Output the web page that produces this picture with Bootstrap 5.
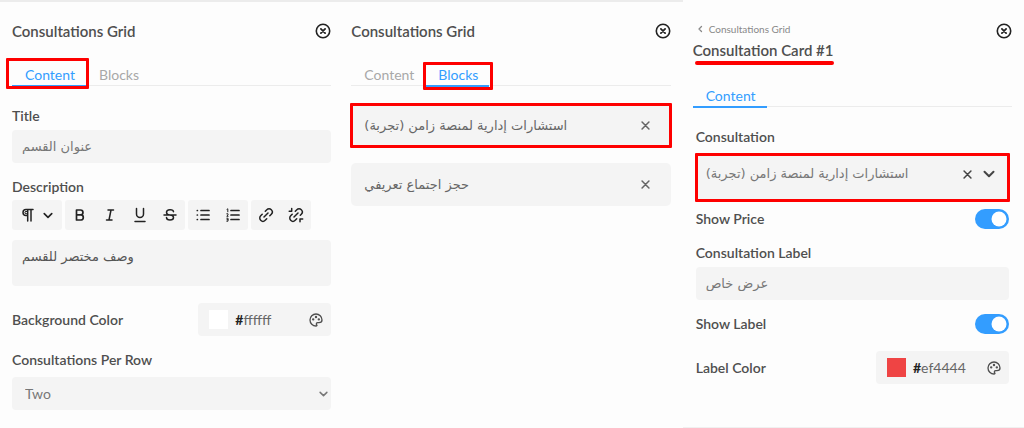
<!DOCTYPE html>
<html lang="en">
<head>
<meta charset="utf-8">
<meta name="viewport" content="width=device-width, initial-scale=1">
<title>Consultations Grid</title>
<link href="https://cdn.jsdelivr.net/npm/bootstrap@5.3.0/dist/css/bootstrap.min.css" rel="stylesheet">
<style>
  :root { --ink: #4f4f4f; --soft: #f4f4f4; --accent: #339dff; --marker: #fe0000; }
  body { background: #fdfdfd; color: var(--ink); font: 400 14px/20px Lato, "DejaVu Sans", sans-serif; }
  button, input, select, textarea { font: inherit; color: inherit; }
  svg { display: block; fill: none; stroke: currentColor; stroke-width: 2; stroke-linecap: round; stroke-linejoin: round; }
  .panel { padding: 0 12px 0 10px; }
  .panel-first { padding: 0 10px 0 12px; }
  .panel-top { border-top: 2px solid #ececec; }
  .panel-card { border-bottom: 1px solid #f0f0f0; padding-bottom: 43px; }
  .panel-head { padding-top: 19px; }
  .panel-name { font-size: 15px; line-height: 20px; font-weight: 600; margin: 0; }
  .plain { border: 0; background: none; padding: 0; }
  .close-icon { color: #222; }
  .tab-strip { border-bottom: 1px solid #ececec; }
  .tab-strip .nav-link { padding: 0 11px 0 13px; height: 20px; color: #a8a8a8; }
  .tab-strip .nav-item { margin-bottom: -2px; border-bottom: 2px solid transparent; }
  .tab-strip .nav-item:has(.active) { border-color: var(--accent); }
  .tab-strip .nav-link.active { color: var(--accent); }
  .card-tabs { margin-top: 26px; }
  .field-name { display: block; margin: 0; font-weight: 600; }
  .gap-above { margin-top: 14px; }
  .row-above { margin-top: 17px; }
  .field { background: var(--soft); border: 0; border-radius: 4px; width: 100%; color: #777; }
  .field-line { height: 33px; padding: 0 10px; }
  .field-area { height: 46px; padding: 7px 10px; margin-top: 10px; resize: none; display: block; color: #555; }
  .field-select { padding: 0 3px 0 13px; margin-top: 7px; }
  .field-tall { height: 47px; padding: 0 14px 7px 10px; gap: 11px; margin-top: 7px; }
  .arabic { direction: rtl; text-align: left; text-align-last: left; font-family: "DejaVu Sans", sans-serif; font-size: 13px; }
  .tools { gap: 3px; margin-top: 3px; }
  .tool-set { background: var(--soft); border-radius: 3px; height: 30px; color: #222; }
  .tool-set button { width: 30px; height: 30px; display: grid; place-items: center; color: inherit; }
  .tool-set .tool-wide { width: 50px; display: flex; align-items: center; justify-content: center; gap: 9px; }
  .colour-box { background: var(--soft); border-radius: 4px; height: 33px; width: 133px; padding: 0 7px 0 11px; }
  .colour-box input[type=color] { width: 19px; height: 19px; padding: 0; border: 0; background: none; appearance: none; flex: none; }
  .colour-box input[type=color]::-webkit-color-swatch-wrapper { padding: 0; }
  .colour-box input[type=color]::-webkit-color-swatch { border: 0; }
  .colour-box input[type=text] { border: 0; background: none; padding: 0; width: 60px; min-width: 0; flex: 1; color: #666; }
  .hash { color: #222; font-weight: 700; margin-left: 7px; }
  .pick { appearance: none; border: 0; background: none; padding: 0; }
  .clear-icon { color: #444; }
  .block-list { margin-top: 18px; }
  .block-item { background: var(--soft); border-radius: 5px; height: 43px; padding: 0 21px 0 13px; color: #666; }
  .crumb-box { padding-top: 3px; }
  .crumb { font-size: 10px; line-height: 14px; color: #888; text-decoration: none; gap: 6px; }
  .panel-body { padding: 0 3px; }
  .form-switch.switch-row { padding: 0; min-height: 20px; margin-bottom: 0; }
  .form-switch .form-check-input { width: 34px; height: 20px; margin: 0; border: 0; box-shadow: none; }
  .form-switch .form-check-input:checked { background-color: var(--accent); }
  .marked { position: relative; }
  .marked::after { content: ""; position: absolute; border: 3px solid var(--marker); border-radius: 1px; pointer-events: none; }
  .mark-content::after { inset: -7px -3px -4px -6px; }
  .mark-blocks::after { inset: -3px -4px -5px -2px; }
  .mark-item::after, .mark-pick::after { inset: -1px; }
  .mark-name::after { left: 2px; right: 0; bottom: -5px; border-width: 2px; border-radius: 2px; }
</style>
</head>
<body>
<svg class="d-none" aria-hidden="true">
  <symbol id="i-close" viewBox="0 0 16 16"><circle cx="8" cy="8" r="6.7" stroke-width="1.6"/><path d="M5.9 5.9l4.2 4.2M10.1 5.9l-4.2 4.2" stroke-width="1.8"/></symbol>
  <symbol id="i-x" viewBox="0 0 10 10"><path d="M1.2 1.2l7.6 7.6M8.8 1.2L1.2 8.8" stroke-width="1.700"/></symbol>
  <symbol id="i-down" viewBox="0 0 12 8"><path d="M1.5 1.8L6 6.2l4.500-4.400" stroke-width="2"/></symbol>
  <symbol id="i-palette" viewBox="0 0 24 24"><path d="M12 21a9 9 0 1 1 9-9c0 2.500-2 4-4.500 4H14.500a2 2 0 0 0-1.300 3.500c.7.700 0 1.500-1.200 1.500z"/><circle cx="7.800" cy="11" r=".8"/><circle cx="12" cy="7.500" r=".8"/><circle cx="16.200" cy="11" r=".8"/></symbol>
</svg>
<main class="container-fluid p-0">
  <div class="row g-0">
    <section class="col-md-4 panel-first panel-top" aria-label="Grid content">
      <header class="panel-head d-flex justify-content-between align-items-center">
        <h2 class="panel-name">Consultations Grid</h2>
        <button class="plain close-icon" aria-label="Close"><svg width="16" height="16"><use href="#i-close"/></svg></button>
      </header>
      <ul class="nav tab-strip mt-4">
        <li class="nav-item marked mark-content"><a class="nav-link active" href="#content">Content</a></li>
        <li class="nav-item"><a class="nav-link" href="#blocks">Blocks</a></li>
      </ul>
      <form id="content">
        <label class="field-name mt-3 pt-1" for="title">Title</label>
        <input id="title" class="field field-line arabic mt-1" value="عنوان القسم">
        <label class="field-name gap-above" for="desc">Description</label>
        <div class="d-flex flex-wrap tools">
          <div class="tool-set"><button type="button" class="plain tool-wide" aria-label="Paragraph style">
            <svg width="12" height="14" viewBox="0 0 12 14"><path d="M11 1.500H4a3 3 0 0 0 0 6h1.500M5.700 1.500V13M9 1.500V13" stroke-width="1.500"/><path d="M4 3.500h1.500v2.200H4a1 1 0 0 1 0-2.200z" stroke-width="1"/></svg>
            <svg width="10" height="7"><use href="#i-down"/></svg></button></div>
          <div class="tool-set d-flex">
            <button type="button" class="plain" aria-label="Bold"><svg width="12" height="14" viewBox="0 0 12 14"><path d="M2.500 2h4a2.400 2.400 0 0 1 0 4.900h-4zM2.500 6.900h4.700a2.600 2.600 0 0 1 0 5.100H2.500z" stroke-width="1.700"/></svg></button>
            <button type="button" class="plain" aria-label="Italic"><svg width="12" height="14" viewBox="0 0 12 14"><path d="M4 2h5.500M2.500 12H8M7 2L5 12" stroke-width="1.500"/></svg></button>
            <button type="button" class="plain" aria-label="Underline"><svg width="12" height="16" viewBox="0 0 12 16"><path d="M2.500 1.500v5.500a3.500 3.500 0 0 0 7 0V1.500M1 14.500h10" stroke-width="1.500"/></svg></button>
            <button type="button" class="plain" aria-label="Strikethrough"><svg width="14" height="14" viewBox="0 0 14 14"><path d="M10.500 3.700C10.200 1 3.500 1 3.500 4.300 3.500 6.500 6 7 7 7c2 .2 3.500 1 3.500 2.500 0 3.300-7 3.300-7 0M1 7h12" stroke-width="1.500"/></svg></button>
          </div>
          <div class="tool-set d-flex">
            <button type="button" class="plain" aria-label="Bulleted list"><svg width="14" height="14" viewBox="0 0 14 14"><path d="M5 2.500h8M5 7h8M5 11.500h8M1.300 2.500h.1M1.300 7h.1M1.300 11.500h.1" stroke-width="1.700"/></svg></button>
            <button type="button" class="plain" aria-label="Numbered list"><svg width="14" height="14" viewBox="0 0 14 14"><path d="M5 2.500h8M5 7h8M5 11.500h8" stroke-width="1.700"/><path d="M1 1.300l.8-.5v3M.8 5.800h1.200v1L.8 8.300h1.300M.8 10.200h1.200v3H.8M1 11.700h1" stroke-width="1"/></svg></button>
          </div>
          <div class="tool-set d-flex">
            <button type="button" class="plain" aria-label="Link"><svg width="16" height="16" viewBox="0 0 16 16"><path d="M6 10l4-4M7.300 4.200l1.500-1.500a3.100 3.100 0 0 1 4.500 4.500l-1.500 1.500M8.700 11.800l-1.500 1.500a3.100 3.100 0 0 1-4.500-4.500l1.500-1.500" stroke-width="1.500"/></svg></button>
            <button type="button" class="plain" aria-label="Remove link"><svg width="16" height="16" viewBox="0 0 16 16"><path d="M6 10l4-4M7.300 4.200l1.500-1.500a3.100 3.100 0 0 1 4.500 4.500l-1 1M8.700 11.800l-1.500 1.500a3.100 3.100 0 0 1-4.500-4.500l1.500-1.500M3.700 1.500v2.800M1.200 4.300h2.500M12 12h2.700M12 12v2.700" stroke-width="1.500"/></svg></button>
          </div>
        </div>
        <textarea id="desc" class="field field-area arabic">وصف مختصر للقسم</textarea>
        <div class="d-flex justify-content-between align-items-center row-above">
          <label class="field-name" for="bg">Background Color</label>
          <div class="colour-box d-flex align-items-center">
            <input type="color" value="#ffffff" aria-label="Background swatch"><span class="hash">#</span>
            <input type="text" id="bg" value="ffffff">
            <button type="button" class="plain" aria-label="Open palette"><svg width="16" height="16"><use href="#i-palette"/></svg></button>
          </div>
        </div>
        <label class="field-name gap-above" for="per-row">Consultations Per Row</label>
        <div class="field field-line field-select d-flex align-items-center">
          <select id="per-row" class="pick flex-grow-1"><option>Two</option><option>Three</option></select>
          <svg width="9" height="6"><use href="#i-down"/></svg>
        </div>
      </form>
    </section>

    <section class="col-md-4 panel panel-top" aria-label="Grid blocks">
      <header class="panel-head d-flex justify-content-between align-items-center">
        <h2 class="panel-name">Consultations Grid</h2>
        <button class="plain close-icon" aria-label="Close"><svg width="16" height="16"><use href="#i-close"/></svg></button>
      </header>
      <ul class="nav tab-strip mt-4">
        <li class="nav-item"><a class="nav-link" href="#content">Content</a></li>
        <li class="nav-item marked mark-blocks"><a class="nav-link active" href="#blocks">Blocks</a></li>
      </ul>
      <ul id="blocks" class="list-unstyled d-grid gap-3 block-list">
        <li class="block-item d-flex align-items-center justify-content-between marked mark-item">
          <button class="plain arabic">استشارات إدارية لمنصة زامن (تجربة)</button>
          <button class="plain" aria-label="Remove"><svg width="9" height="9"><use href="#i-x"/></svg></button>
        </li>
        <li class="block-item d-flex align-items-center justify-content-between">
          <button class="plain arabic">حجز اجتماع تعريفي</button>
          <button class="plain" aria-label="Remove"><svg width="9" height="9"><use href="#i-x"/></svg></button>
        </li>
      </ul>
    </section>

    <section class="col-md-4 panel panel-card" aria-label="Consultation card">
      <header class="panel-head d-flex justify-content-between align-items-start">
        <div class="crumb-box">
          <a class="crumb d-flex align-items-center" href="#grid"><svg class="ms-1" width="6" height="8" viewBox="0 0 6 8"><path d="M4.500 1.500L2 4l2.500 2.500" stroke-width="1.300"/></svg>Consultations Grid</a>
          <h2 class="panel-name marked mark-name mt-1">Consultation Card #1</h2>
        </div>
        <button class="plain close-icon" aria-label="Close"><svg class="mt-1" width="16" height="16"><use href="#i-close"/></svg></button>
      </header>
      <ul class="nav tab-strip card-tabs">
        <li class="nav-item"><a class="nav-link active" href="#card">Content</a></li>
      </ul>
      <form id="card" class="panel-body">
        <label class="field-name mt-3 pt-1" for="consult">Consultation</label>
        <div class="field field-tall d-flex align-items-center marked mark-pick">
          <select id="consult" class="pick arabic flex-grow-1"><option>استشارات إدارية لمنصة زامن (تجربة)</option></select>
          <button type="button" class="plain clear-icon" aria-label="Clear"><svg width="9" height="9"><use href="#i-x"/></svg></button>
          <svg class="clear-icon" width="12" height="8"><use href="#i-down"/></svg>
        </div>
        <div class="form-check form-switch switch-row mt-2 d-flex justify-content-between align-items-center">
          <label class="field-name" for="price">Show Price</label><input class="form-check-input" type="checkbox" role="switch" id="price" checked>
        </div>
        <label class="field-name gap-above" for="clabel">Consultation Label</label>
        <input id="clabel" class="field field-line arabic mt-1" value="عرض خاص">
        <div class="form-check form-switch switch-row gap-above d-flex justify-content-between align-items-center">
          <label class="field-name" for="slabel">Show Label</label><input class="form-check-input" type="checkbox" role="switch" id="slabel" checked>
        </div>
        <div class="d-flex justify-content-between align-items-center row-above">
          <label class="field-name" for="lc">Label Color</label>
          <div class="colour-box d-flex align-items-center">
            <input type="color" value="#ef4444" aria-label="Label swatch"><span class="hash">#</span>
            <input type="text" id="lc" value="ef4444">
            <button type="button" class="plain" aria-label="Open palette"><svg width="16" height="16"><use href="#i-palette"/></svg></button>
          </div>
        </div>
      </form>
    </section>
  </div>
</main>
<script src="https://cdn.jsdelivr.net/npm/bootstrap@5.3.0/dist/js/bootstrap.bundle.min.js"></script>
</body>
</html>
